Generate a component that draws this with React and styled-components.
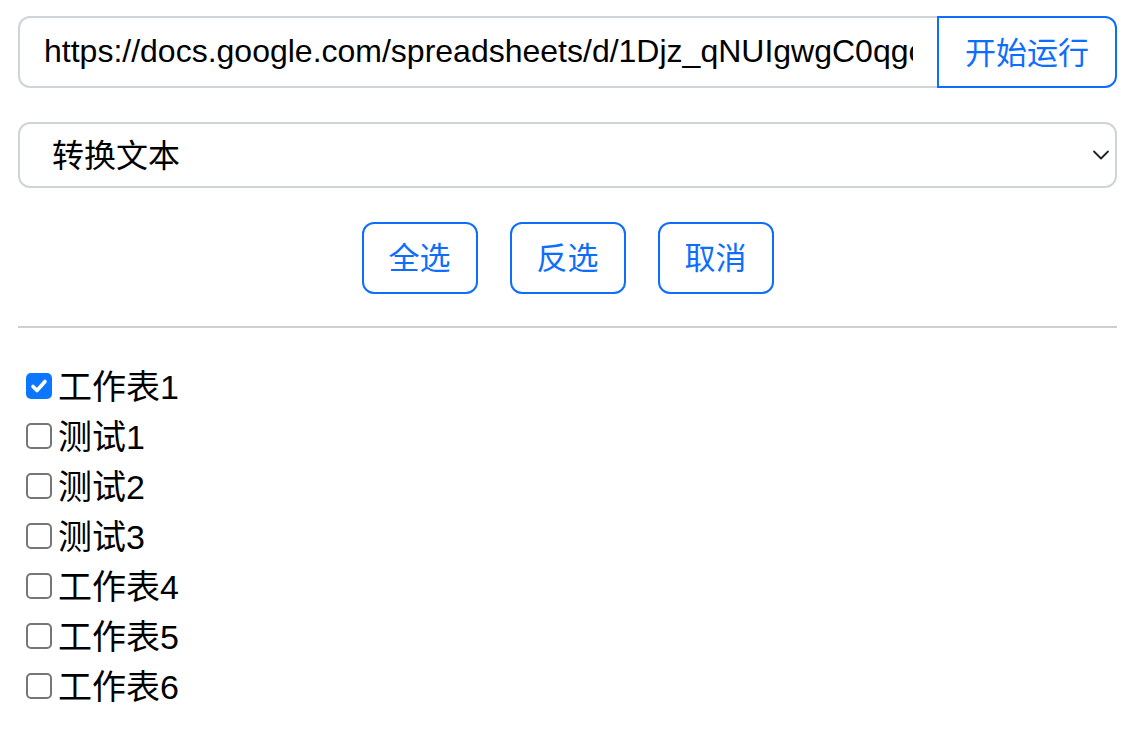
import React, { useState } from 'react';
import styled, { createGlobalStyle } from 'styled-components';

const GlobalStyle = createGlobalStyle`
  body {
    margin: 0;
    background: #fff;
    font-family: "Liberation Sans", "Noto Sans CJK SC", sans-serif;
    color: #000;
  }
`;

const Page = styled.div`
  width: 1099px;
  padding: 16px 0 0 18px;
  display: flex;
  flex-direction: column;
`;

const UrlGroup = styled.div`
  display: flex;
  height: 72px;
`;

const UrlInput = styled.input`
  flex: 1;
  min-width: 0;
  box-sizing: border-box;
  height: 72px;
  padding: 0 24px 2px;
  border: 2px solid #ced4da;
  border-right: none;
  border-radius: 12px 0 0 12px;
  font-family: "Liberation Sans", "Noto Sans CJK SC", sans-serif;
  font-size: 32px;
  color: #000;
  outline: none;
`;

const RunButton = styled.button`
  box-sizing: border-box;
  width: 180px;
  height: 72px;
  border: 2px solid #0d6efd;
  border-radius: 0 12px 12px 0;
  background: #fff;
  color: #0d6efd;
  font-family: "Noto Sans CJK SC", sans-serif;
  font-size: 31px;
  padding: 0 0 4px;
`;

const SelectWrap = styled.div`
  position: relative;
  margin-top: 34px;
`;

const Select = styled.select`
  width: 100%;
  box-sizing: border-box;
  height: 66px;
  padding: 0 60px 4px 32px;
  border: 2px solid #ced4da;
  border-radius: 12px;
  background: #fff;
  appearance: none;
  font-family: "Noto Sans CJK SC", sans-serif;
  font-size: 32px;
  color: #000;
  outline: none;
`;

const Chevron = styled.svg`
  position: absolute;
  right: 7px;
  top: 26px;
  width: 18px;
  height: 14px;
  pointer-events: none;
`;

const ActionRow = styled.div`
  display: flex;
  justify-content: center;
  gap: 32px;
  margin-top: 34px;
`;

const OutlineButton = styled.button`
  box-sizing: border-box;
  width: 116px;
  height: 72px;
  border: 2px solid #0d6efd;
  border-radius: 12px;
  background: #fff;
  color: #0d6efd;
  font-family: "Noto Sans CJK SC", sans-serif;
  font-size: 31px;
  padding: 0 0 5px;
`;

const Divider = styled.hr`
  width: 100%;
  margin: 32px 0 0;
  border: none;
  border-top: 2px solid #cfcfcf;
`;

const SheetList = styled.div`
  display: flex;
  flex-direction: column;
  margin-top: 33px;
  padding-left: 8px;
`;

const SheetRow = styled.label`
  display: flex;
  align-items: center;
  height: 50px;
  font-family: "Liberation Sans", "Noto Sans CJK SC", sans-serif;
  font-size: 34px;
`;

const RowText = styled.span`
  margin-top: -3px;
`;

const Box = styled.span`
  box-sizing: border-box;
  width: 26px;
  height: 26px;
  margin-right: 6px;
  border-radius: 5px;
  border: ${(p) => (p.checked ? 'none' : '2px solid #767676')};
  background: ${(p) => (p.checked ? '#0b76ff' : '#fff')};
  display: flex;
  align-items: center;
  justify-content: center;
`;

const sheets = ['工作表1', '测试1', '测试2', '测试3', '工作表4', '工作表5', '工作表6'];

export default function App() {
  const [checked, setChecked] = useState({ 0: true });

  const toggle = (i) => setChecked((c) => ({ ...c, [i]: !c[i] }));

  return (
    <>
      <GlobalStyle />
      <Page>
        <UrlGroup>
          <UrlInput defaultValue="https://docs.google.com/spreadsheets/d/1Djz_qNUIgwgC0qgcXlYtz8vE" />
          <RunButton>开始运行</RunButton>
        </UrlGroup>
        <SelectWrap>
          <Select defaultValue="text">
            <option value="text">转换文本</option>
          </Select>
          <Chevron viewBox="0 0 18 14">
            <path d="M2 3.5l7 7 7-7" fill="none" stroke="#222" strokeWidth="1.8" strokeLinecap="round" strokeLinejoin="round" />
          </Chevron>
        </SelectWrap>
        <ActionRow>
          <OutlineButton onClick={() => setChecked(Object.fromEntries(sheets.map((_, i) => [i, true])))}>全选</OutlineButton>
          <OutlineButton onClick={() => setChecked((c) => Object.fromEntries(sheets.map((_, i) => [i, !c[i]])))}>反选</OutlineButton>
          <OutlineButton onClick={() => setChecked({})}>取消</OutlineButton>
        </ActionRow>
        <Divider />
        <SheetList>
          {sheets.map((name, i) => (
            <SheetRow key={name} onClick={() => toggle(i)}>
              <Box checked={!!checked[i]}>
                {checked[i] && (
                  <svg width="18" height="16" viewBox="0 0 18 16">
                    <path d="M3 8.5l4 4 8-9" fill="none" stroke="#fff" strokeWidth="3.6" strokeLinecap="round" strokeLinejoin="round" />
                  </svg>
                )}
              </Box>
              <RowText>{name}</RowText>
            </SheetRow>
          ))}
        </SheetList>
      </Page>
    </>
  );
}
